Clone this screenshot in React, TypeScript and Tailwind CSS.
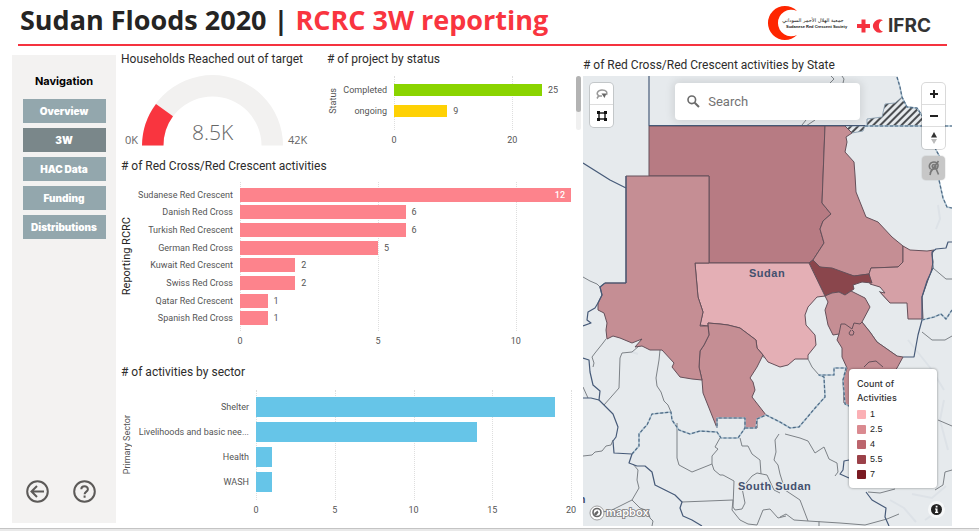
import type { ReactNode } from "react";

type Bar = { label: string; value: number; color: string };

const statusBars: Bar[] = [
  { label: "Completed", value: 25, color: "bg-[#8ad400]" },
  { label: "ongoing", value: 9, color: "bg-[#fed104]" },
];

const activityBars: Bar[] = [
  { label: "Sudanese Red Crescent", value: 12, color: "bg-[#fd838c]" },
  { label: "Danish Red Cross", value: 6, color: "bg-[#fd838c]" },
  { label: "Turkish Red Crescent", value: 6, color: "bg-[#fd838c]" },
  { label: "German Red Cross", value: 5, color: "bg-[#fd838c]" },
  { label: "Kuwait Red Crescent", value: 2, color: "bg-[#fd838c]" },
  { label: "Swiss Red Cross", value: 2, color: "bg-[#fd838c]" },
  { label: "Qatar Red Crescent", value: 1, color: "bg-[#fd838c]" },
  { label: "Spanish Red Cross", value: 1, color: "bg-[#fd838c]" },
];

const sectorBars: Bar[] = [
  { label: "Shelter", value: 19, color: "bg-[#66c5e8]" },
  { label: "Livelihoods and basic nee...", value: 14, color: "bg-[#66c5e8]" },
  { label: "Health", value: 1, color: "bg-[#66c5e8]" },
  { label: "WASH", value: 1, color: "bg-[#66c5e8]" },
];

const labelFont = "font-[Roboto,'Noto_Sans',sans-serif] text-[9px] leading-3 text-[#555]";

function Title({ children }: { children: ReactNode }) {
  return (
    <h2 className="font-[Roboto,sans-serif] text-xs leading-4 whitespace-nowrap text-[#2d2c2b]">{children}</h2>
  );
}

function BarChart({
  axis,
  axisClass,
  labelClass,
  bars,
  ticks,
  max,
  barClass,
  plotClass,
  showValues = true,
}: {
  axis: string;
  axisClass: string;
  labelClass: string;
  bars: Bar[];
  ticks: number[];
  max: number;
  barClass: string;
  plotClass: string;
  showValues?: boolean;
}) {
  return (
    <div className={`flex ${labelFont}`}>
      <div className={`flex w-3 shrink-0 items-center justify-center ${plotClass}`}>
        <span className={`rotate-180 whitespace-nowrap [writing-mode:vertical-rl] ${axisClass}`}>{axis}</span>
      </div>
      <div className={`flex shrink-0 flex-col pr-[7px] text-right ${labelClass} ${plotClass}`}>
        {bars.map((b) => (
          <span key={b.label} className="flex flex-1 items-center justify-end whitespace-nowrap">
            {b.label}
          </span>
        ))}
      </div>
      <div className="min-w-0 flex-1">
        <div className={`relative flex flex-col ${plotClass}`}>
          {ticks.map((t) => (
            <span
              key={t}
              className="absolute inset-y-0 border-l border-dotted border-[#dedede]"
              style={{ left: `${(t / max) * 100}%` }}
            />
          ))}
          {bars.map((b) => (
            <div key={b.label} className="relative flex flex-1 items-center">
              <div
                className={`flex shrink-0 items-center justify-end pr-1.5 text-white ${barClass} ${b.color}`}
                style={{ width: `${(b.value / max) * 100}%` }}
              >
                {showValues && b.value === max && <b className="font-medium">{b.value}</b>}
              </div>
              {showValues && b.value !== max && <span className="pl-1.5">{b.value}</span>}
            </div>
          ))}
        </div>
        <div className="relative mt-1 h-3">
          {ticks.map((t) => (
            <span key={t} className="absolute -translate-x-1/2" style={{ left: `${(t / max) * 100}%` }}>
              {t}
            </span>
          ))}
        </div>
      </div>
    </div>
  );
}

function Gauge() {
  return (
    <div className="flex items-end pl-1 font-['Open_Sans',sans-serif] text-[11px] leading-3 text-[#666]">
      <span className="w-4 shrink-0 whitespace-nowrap">0K</span>
      <div className="relative w-[143px] shrink-0">
        <svg viewBox="0 0 143 72" className="block w-full">
          <path d="M1 71.5A70.500 70.500 0 0 1 142 71.500H120.500A49 49 0 0 0 22.500 71.500Z" fill="#f2f1f0" />
          <path d="M1 71.500A70.500 70.500 0 0 1 15 30L32 42.200A49 49 0 0 0 22.500 71.500Z" fill="#f9353f" />
        </svg>
        <span className="absolute inset-x-0 bottom-0 text-center text-[21px] leading-7 font-light text-[#666]">
          8.5K
        </span>
      </div>
      <span className="pl-1">42K</span>
    </div>
  );
}

const navItems = ["Overview", "3W", "HAC Data", "Funding", "Distributions"];

function Sidebar() {
  return (
    <nav className="flex w-[104px] shrink-0 flex-col items-center bg-[#f3f2f1] pt-5 pb-5 font-[Inter,sans-serif]">
      <h2 className="text-[11px] leading-3 font-bold text-black">Navigation</h2>
      <div className="mt-3 flex w-[83px] flex-col gap-[5px]">
        {navItems.map((n) => (
          <button
            key={n}
            type="button"
            className={`h-6 text-[10px] leading-3 font-black text-white ${n === "3W" ? "bg-[#7a878a]" : "bg-[#93a7ad]"}`}
          >
            {n}
          </button>
        ))}
      </div>
      <div className="mt-auto flex gap-6 pr-1.5">
        <button type="button" aria-label="Back">
          <svg width="23" height="23" viewBox="0 0 23 23" fill="none" stroke="#5c5a58" strokeWidth="2">
            <circle cx="11.5" cy="11.5" r="10.3" />
            <path d="M18 11.500H5.500M11 6l-5.500 5.500L11 17" />
          </svg>
        </button>
        <button type="button" aria-label="Help">
          <svg width="23" height="23" viewBox="0 0 23 23" fill="none" stroke="#5c5a58" strokeWidth="2">
            <circle cx="11.5" cy="11.5" r="10.3" />
            <path d="M8.300 9.200c0-4 6.600-4 6.600 0 0 2.400-3.300 2.400-3.300 5M11.600 15.500v2.200" />
          </svg>
        </button>
      </div>
    </nav>
  );
}

function Logos() {
  return (
    <div className="flex items-center gap-2">
      <svg width="82" height="36" viewBox="0 0 82 36" role="img" aria-label="Sudanese Red Crescent Society">
        <path d="M31 7A17 17 0 1 0 31 31A13.300 13.300 0 1 1 31 7Z" fill="#fe2600" />
        <text x="47" y="18" textAnchor="middle" fontSize="5" fontFamily="DejaVu Sans, sans-serif" fill="#111">
          جمعية الهلال الأحمر السوداني
        </text>
        <text
          x="20"
          y="24"
          fontSize="4"
          fontWeight="700"
          fontFamily="Liberation Sans Narrow, Liberation Sans, sans-serif"
          fill="#111"
        >
          Sudanese Red Crescent Society
        </text>
      </svg>
      <div className="flex items-center gap-0.5 pt-2">
        <svg width="30" height="16" viewBox="0 0 30 16" aria-hidden="true">
          <path d="M5.500 1.500h4v4.500H14v4H9.500v4.500h-4V10H1V6h4.500Z" fill="#f5333f" />
          <path d="M27 2.300A6.600 6.600 0 1 0 27 13.700A6 6 0 0 1 27 2.300Z" fill="#f5333f" />
        </svg>
        <span className="font-[Inter,sans-serif] text-[19px] leading-4 font-bold text-[#333]">IFRC</span>
      </div>
    </div>
  );
}

const greyLines = [
  "M583 277L590 281L597 284L600 287",
  "M606 339L603 343L595 353L592 357L594 363L593 367",
  "M639 346L632 352L622 353L620 358L619 388L604 405",
  "M660 350L659 360L656 378L657 386L661 392L664 401L668 405L671 412",
  "M677 423L677 458L679 465L692 472L712 464L712 456L718 449L715 447L720 438",
  "M712 464L714 470L720 475L723 475L734 481L733 507L735 510L742 509L745 503L742 488L752 476L757 473L767 475L774 490L780 493",
  "M740 438L742 446L748 446L752 454L760 460L761 474",
  "M583 456L592 455L595 452L602 451L606 446L611 445L613 440",
  "M633 464L638 470L637 480L639 488L632 500L640 508L648 511L650 518L653 521L652 526",
  "M632 500L610 511L600 512",
  "M682 502L733 500",
  "M733 500L732 510L740 520L748 524L757 525L763 510L770 509L778 518L786 516",
  "M779 434L775 440L776 452L774 460L778 465L780 474L785 490L800 500L808 521L840 523L865 525L887 519L899 514",
  "M785 434L800 438L808 441L815 453L824 447L829 459L837 463L838 472L835 476",
  "M819 521V526M780 517L786 514L794 520L808 521",
  "M879 291L890 303M862 322L870 332L877 342L897 356",
  "M762 356L768 360M808 359L812 367L819 375",
  "M583 387L588 398",
  "M922 332L932 340L945 340L952 336",
  "M933 268L946 279L952 279",
  "M868 492L880 493L895 489M935 490L943 485L945 472L952 470M938 420L952 426",
  "M831 76L834 79L830 83M842 76L844 79L843 83M802 125L806 120M806 126L815 120",
];

const navyLines = [
  "M583 163L610 180L626 188",
  "M649 76V126",
  "M598 303L595 308L588 312L587 320L591 323L583 326",
  "M583 358L589 360L590 372L593 385L600 391L599 400L604 405L613 414L618 427L616 437L613 441L614 453L632 454L629 463L637 466L645 466L652 472L655 485L665 490L675 495L682 502L680 508L683 516L692 520L702 526",
  "M583 398L591 398L599 400",
  "M903 357H914L918 335L922 320L922 297L927 281L933 268L932 252L936 249L946 248L948 242L952 242",
  "M866 492L872 500L886 508L885 517L889 526",
  "M849 460L844 461L843 470L840 474L849 478",
];

const dashedLines = [
  "M632 454L639 446L639 434L644 428L647 425L652 414L671 412L672 420L679 430L690 434L700 431L717 432L721 438H738L745 428V418H717V428",
  "M745 428H756L757 419L766 415L780 422L790 428L799 427L816 407L825 397L824 377L819 375H834V368H846L843 380L845 404L849 406",
  "M922 320L934 317L941 314L946 319L952 310",
  "M865 126H952",
  "M897 77L900 87L902 97L907 107L917 108L923 117L936 150L940 157L939 180L943 198L947 207L952 208",
];

const states = [
  { fill: "#b77b83", d: "M649 126H825L822 203L831 214L823 221L820 229L824 243L813 260L809 263H709V176H649Z" },
  {
    fill: "#c58e94",
    d: "M825 126H845L852 133L846 137L847 142L845 152L854 162L855 175L856 192L866 217L878 222L892 237L903 246L903 262L898 267L871 268L869 274L854 276L820 267L813 260L824 243L820 229L823 221L831 214L822 203Z",
  },
  {
    fill: "#d5a0a6",
    d: "M903 246L910 250L927 251L934 250L932 254L933 262L931 272L928 280L922 297L923 319H908L907 303H890L880 292L885 293L880 287L870 284L869 274L871 268L898 267L903 262Z",
  },
  {
    fill: "#8a464c",
    d: "M809 263L813 260L820 267L832 268L854 276L869 274L872 283L862 282L853 285L854 289L845 295L839 292L832 293L825 296Z",
  },
  {
    fill: "#e4afb5",
    d: "M695 263H809L825 296L817 297L808 307L805 315L806 325L815 335L816 345L808 355L808 359H795L788 365L780 367L768 362L763 355L757 348L756 340L740 328L728 325L720 324L708 323V326L700 325L703 312L698 297Z",
  },
  {
    fill: "#c58e94",
    d: "M708 323L720 324L728 325L740 328L756 340L757 348L763 355L757 367L750 378L753 382L755 390L752 397L766 415L757 419V428H745V418H717V428L703 393L702 380L699 367L700 351L704 345L709 335Z",
  },
  {
    fill: "#c58e94",
    d: "M626 176H709V263H695L698 297L703 312L700 326H708L709 335L704 345L700 351L699 367L702 380L692 379L680 377L672 367L674 363L662 350H650L642 346L635 347L642 339L632 343L620 338L613 336L607 339L606 330L607 323L604 313L598 310V303L602 295L600 287L605 283H626Z",
  },
  {
    fill: "#c58e94",
    d: "M825 296L832 293L839 292L845 295L851 291L865 298L870 307L862 322L870 332L877 342L897 356L903 357L897 368L870 400L849 406L844 403L843 380L847 368L842 357L842 348L837 340L839 334L833 335L828 325L825 310L828 302Z",
  },
];

const halaib = "M845 126L867 126V119L882 117L885 104L895 103L902 97L907 107L917 108L923 117V126H865L863 131L852 133Z";

function MapDrawing() {
  return (
    <svg
      viewBox="583 76 369 450"
      preserveAspectRatio="xMidYMid slice"
      className="absolute inset-0 h-full w-full"
      role="img"
      aria-label="Map of Sudan"
    >
      <defs>
        <pattern id="hatch" width="5" height="5" patternUnits="userSpaceOnUse" patternTransform="rotate(45)">
          <rect width="5" height="5" fill="#e6eaed" />
          <rect width="2" height="5" fill="#4c4f53" />
        </pattern>
      </defs>
      <rect x="583" y="76" width="369" height="450" fill="#e6eaed" />
      <path d="M897 76L900 87L902 97L907 107L917 108L923 117L936 150L940 157L939 180L943 198L947 207L952 208V76Z" fill="#fff" />
      <g fill="none" stroke="#dde2e7" strokeWidth="2">
        <path d="M632 352l6 2M938 205l2 14-4 10M905 430l10 12 20-4M890 500l14 8 12 14M912 494l20 4 14-12M944 400l-4 20 8 30M908 340l24 30 12 20M925 520l20-14" />
      </g>
      <g fill="none" stroke="#7d8287" strokeWidth="1" strokeLinejoin="round">
        {greyLines.map((d) => (
          <path key={d} d={d} />
        ))}
      </g>
      <path d={halaib} fill="url(#hatch)" stroke="#7f95a8" strokeWidth="0.8" />
      <g stroke="#65505a" strokeWidth="1" strokeLinejoin="round">
        {states.map((s) => (
          <path key={s.d} d={s.d} fill={s.fill} />
        ))}
      </g>
      <path
        d="M839 334L841 324H845L852 329L854 323L860 324L862 322M851 330l-2 3 1 2h3l1-3-2-2M864 367l5-5 7-1 7 6"
        fill="none"
        stroke="#65505a"
      />
      <g fill="none" stroke="#465a78" strokeWidth="1.200" strokeLinejoin="round">
        {navyLines.map((d) => (
          <path key={d} d={d} />
        ))}
        <path d="M649 125.500H865M626 176V283M605 283H626M605 283L600 287L602 295L598 303" />
      </g>
      <g fill="none" strokeLinejoin="round">
        {dashedLines.map((d) => (
          <g key={d}>
            <path d={d} stroke="#a9c0cf" strokeWidth="1.500" />
            <path d={d} stroke="#4f6a85" strokeWidth="1.200" strokeDasharray="3 2" />
          </g>
        ))}
      </g>
      <g fontFamily="Liberation Sans, sans-serif" fontSize="11" fontWeight="700" fill="#43506e" letterSpacing="0.500">
        <text x="749" y="277">
          Sudan
        </text>
        <text x="738" y="490" stroke="#e6eaed" strokeWidth="2" paintOrder="stroke">
          South Sudan
        </text>
        <text x="586" y="503" textAnchor="end">
          n
        </text>
      </g>
      <g>
        <circle cx="597" cy="513" r="7" fill="#fff" stroke="#888" strokeWidth="0.800" />
        <circle cx="597" cy="512.500" r="4" fill="#fff" stroke="#666" strokeWidth="1.600" />
        <path d="M594 516l.5-3 3-2.500 1 2-2 2.500Z" fill="#666" />
        <text
          x="606"
          y="516"
          fontFamily="Inter, sans-serif"
          fontSize="11"
          fontWeight="600"
          fill="#fff"
          stroke="#777"
          strokeWidth="1.600"
          paintOrder="stroke"
        >
          mapbox
        </text>
      </g>
    </svg>
  );
}

const legend = [
  { label: "1", color: "bg-[#fbb0b5]" },
  { label: "2.5", color: "bg-[#da8a90]" },
  { label: "4", color: "bg-[#bc656d]" },
  { label: "5.5", color: "bg-[#9b4149]" },
  { label: "7", color: "bg-[#7a1a22]" },
];

const controlBox = "absolute w-[23px] divide-y divide-[#ddd] overflow-hidden rounded bg-white ring-1 ring-black/15";
const controlButton = "flex w-full items-center justify-center";

function MapPanel() {
  return (
    <div className="relative min-h-[450px] flex-1 overflow-hidden font-['Liberation_Sans',Arial,sans-serif]">
      <MapDrawing />
      <div className={`${controlBox} top-[7px] left-[7px]`}>
        <button type="button" aria-label="Lasso" className={`${controlButton} h-[22px]`}>
          <svg width="12" height="12" viewBox="0 0 12 12" fill="none" stroke="#999" strokeWidth="1.500">
            <path d="M2.500 9V7.500C0 6 1.500 2 6 2s5.500 2.500 4.500 5M1 10.500L2.500 8H6" />
            <path d="M5.500 5.500h5L8.500 10Z" fill="#666" stroke="none" />
          </svg>
        </button>
        <button type="button" aria-label="Select area" className={`${controlButton} h-[22px]`}>
          <svg width="10" height="10" viewBox="0 0 10 10" fill="none" stroke="#222" strokeWidth="1.500">
            <path d="M2 2h6v6H2Z" />
            <path d="M0 0h3v3H0ZM7 0h3v3H7ZM0 7h3v3H0ZM7 7h3v3H7Z" fill="#111" stroke="none" />
          </svg>
        </button>
      </div>
      <label className="absolute top-[7px] right-[25%] left-[25%] flex h-[37px] items-center rounded bg-white pl-3 shadow-[0_0_8px_2px_rgba(0,0,0,0.1)]">
        <svg width="13" height="13" viewBox="0 0 13 13" fill="none" stroke="#6b6b6b" aria-hidden="true">
          <circle cx="4.800" cy="4.800" r="3.800" strokeWidth="1.600" />
          <path d="M7.700 7.700L12 12" strokeWidth="2" />
        </svg>
        <input
          type="text"
          aria-label="Search"
          placeholder="Search"
          className="ml-2 min-w-0 flex-1 bg-transparent font-[Roboto,sans-serif] text-[13px] text-[#666] outline-none placeholder:text-[#737373]"
        />
      </label>
      <div className={`${controlBox} top-[7px] right-[7px]`}>
        <button type="button" aria-label="Zoom in" className={`${controlButton} h-[22px]`}>
          <svg width="8" height="8" viewBox="0 0 8 8" stroke="#222" strokeWidth="2">
            <path d="M4 0V8M0 4H8" />
          </svg>
        </button>
        <button type="button" aria-label="Zoom out" className={`${controlButton} h-[22px]`}>
          <svg width="8" height="8" viewBox="0 0 8 8" stroke="#222" strokeWidth="2">
            <path d="M0 4H8" />
          </svg>
        </button>
        <button type="button" aria-label="Reset bearing" className={`${controlButton} h-[22px]`}>
          <svg width="6" height="12" viewBox="0 0 6 12">
            <path d="M3 0L6 5.500H0Z" fill="#333" />
            <path d="M3 12L6 7H0Z" fill="#bbb" />
          </svg>
        </button>
      </div>
      <div className="absolute top-20 right-[7px] w-[23px] rounded-sm bg-[#c7c7c7] ring-1 ring-black/5">
        <button type="button" aria-label="Toggle drawing" className={`${controlButton} h-6`}>
          <svg width="12" height="16" viewBox="0 0 12 16" fill="none" stroke="#777" strokeWidth="1.600">
            <path d="M2.500 9C0 6 2 2 6 2s5 3.500 3 6.500L3.500 9.500 2 15M8 8.500l2.500 6M10.500 1L2 13M6 4.500a1.800 1.800 0 1 0 .1 0" />
          </svg>
        </button>
      </div>
      <section className="absolute right-[15px] bottom-[38px] w-[88px] rounded-sm bg-white px-2 pt-2 pb-1.5 shadow-[0_0_2px_1px_rgba(0,0,0,0.2)]">
        <h3 className="font-[Inter,sans-serif] text-[9px] leading-[14px] font-medium text-[#333]">
          Count of
          <br />
          Activities
        </h3>
        <ul className="mt-0.5 text-[9px] leading-[15px] text-[#222]">
          {legend.map((l) => (
            <li key={l.label} className="flex items-center gap-1">
              <span className={`size-[9px] rounded-[1px] ${l.color}`} />
              {l.label}
            </li>
          ))}
        </ul>
      </section>
      <button
        type="button"
        aria-label="Attribution"
        className="absolute right-[7px] bottom-[8px] flex size-[17px] items-center justify-center rounded-full bg-white/60"
      >
        <svg width="11" height="11" viewBox="0 0 11 11">
          <circle cx="5.500" cy="5.500" r="5.500" fill="#222" />
          <path d="M4.700 1.800h1.800v1.700H4.700ZM4 4.500h2.500v3.300h.7v1.200H4V7.800h.7V5.600H4Z" fill="#fff" />
        </svg>
      </button>
    </div>
  );
}

export default function App() {
  return (
    <div className="flex min-h-screen flex-col bg-white">
      <header className="mr-8 ml-[18px] flex h-[46px] items-center justify-between border-b-2 border-[#f5333f] pr-4 pl-0.5">
        <h1 className="pb-1 font-['Open_Sans','Noto_Sans',sans-serif] text-[27px] leading-9 font-bold whitespace-nowrap text-[#252423]">
          Sudan Floods 2020 | <span className="text-[#f9353f]">RCRC 3W reporting</span>
        </h1>
        <Logos />
      </header>
      <main className="flex flex-1 pr-[27px] pl-3">
        <div className="flex pt-[9px] pb-[5px]">
          <Sidebar />
        </div>
        <div className="flex min-w-0 flex-[462] flex-col pt-[5px] pl-[5px]">
          <div className="flex">
            <section className="w-[206px] shrink-0">
              <Title>Households Reached out of target</Title>
              <div className="mt-[7px]">
                <Gauge />
              </div>
            </section>
            <section className="min-w-0 flex-1">
              <Title># of project by status</Title>
              <div className="mt-[9px] flex pr-0.5">
                <div className="min-w-0 flex-1 pr-[34px]">
                  <BarChart
                    axis="Status"
                    axisClass="text-[9px]"
                    labelClass="w-[55px]"
                    bars={statusBars}
                    ticks={[0, 20]}
                    max={25.01}
                    barClass="h-3"
                    plotClass="h-[54px] pt-[3px] pb-2"
                  />
                </div>
                <div className="h-[54px] w-[5px] rounded-full bg-[#f0f0f0]">
                  <div className="h-9 rounded-full bg-[#b3b3b3]" />
                </div>
              </div>
            </section>
          </div>
          <section className="mt-3 pr-3">
            <Title># of Red Cross/Red Crescent activities</Title>
            <div className="mt-2">
              <BarChart
                axis="Reporting RCRC"
                axisClass="text-[11px] text-[#252423]"
                labelClass="w-[107px]"
                bars={activityBars}
                ticks={[0, 5, 10]}
                max={12}
                barClass="h-3.5"
                plotClass="h-[149px] pt-1 pb-1"
              />
            </div>
          </section>
          <section className="mt-[17px] pr-3">
            <Title># of activities by sector</Title>
            <div className="mt-2.5">
              <BarChart
                axis="Primary Sector"
                axisClass="text-[9px]"
                labelClass="w-[123px]"
                bars={sectorBars}
                ticks={[0, 5, 10, 15, 20]}
                max={20}
                barClass="h-5"
                plotClass="h-[110px] pt-[5px] pb-1.5"
                showValues={false}
              />
            </div>
          </section>
        </div>
        <section className="flex min-w-0 flex-[369] flex-col pt-[11px] pb-0.5">
          <Title># of Red Cross/Red Crescent activities by State</Title>
          <div className="mt-[3px] flex flex-1">
            <MapPanel />
          </div>
        </section>
      </main>
      <footer className="h-[3px] border-t border-[#c4c4c4] bg-[#e9e9e9]" />
    </div>
  );
}
